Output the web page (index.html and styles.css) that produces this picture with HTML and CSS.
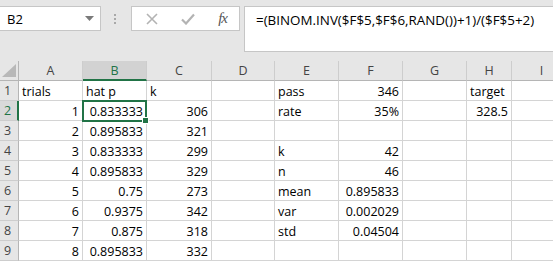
FILE: index.html
```html
<!doctype html>
<html>
<head>
<meta charset="utf-8">
<title>Sheet1</title>
<link rel="stylesheet" href="styles.css">
</head>
<body>
<div class="app">
	<div class="bar">
		<div class="namebox">
			<span>B2</span>
			<svg class="caret" width="9" height="5" viewBox="0 0 9 5"><path d="M0 0h9L4.5 5z" fill="#7a7a7a"/></svg>
		</div>
		<div class="grip"><i></i><i></i><i></i></div>
		<div class="fbtns">
			<svg width="12" height="12" viewBox="0 0 12 12"><path d="M1 1l10 10M11 1L1 11" stroke="#b3b3b3" stroke-width="1.6"/></svg>
			<svg width="14" height="12" viewBox="0 0 14 12"><path d="M1 6.5l4 4L13 1.5" stroke="#b3b3b3" stroke-width="2.2" fill="none"/></svg>
			<span class="fx">fx</span>
		</div>
		<div class="formula">=(BINOM.INV($F$5,$F$6,RAND())+1)/($F$5+2)</div>
	</div>

	<div class="sheet">
		<div class="hd corner"><svg width="14" height="13" viewBox="0 0 14 13"><path d="M14 0V13H0z" fill="#b8b8b8"/></svg></div>
		<div class="hd col">A</div><div class="hd col on">B</div><div class="hd col">C</div><div class="hd col">D</div><div class="hd col">E</div><div class="hd col">F</div><div class="hd col">G</div><div class="hd col">H</div><div class="hd col">I</div>

		<div class="hd row">1</div><div class="c">trials</div><div class="c">hat p</div><div class="c">k</div><div class="c"></div><div class="c">pass</div><div class="c n">346</div><div class="c"></div><div class="c">target</div><div class="c"></div>
		<div class="hd row on">2</div><div class="c n">1</div><div class="c n sel">0.833333</div><div class="c n">306</div><div class="c"></div><div class="c">rate</div><div class="c n">35%</div><div class="c"></div><div class="c n">328.5</div><div class="c"></div>
		<div class="hd row">3</div><div class="c n">2</div><div class="c n">0.895833</div><div class="c n">321</div><div class="c"></div><div class="c"></div><div class="c"></div><div class="c"></div><div class="c"></div><div class="c"></div>
		<div class="hd row">4</div><div class="c n">3</div><div class="c n">0.833333</div><div class="c n">299</div><div class="c"></div><div class="c">k</div><div class="c n">42</div><div class="c"></div><div class="c"></div><div class="c"></div>
		<div class="hd row">5</div><div class="c n">4</div><div class="c n">0.895833</div><div class="c n">329</div><div class="c"></div><div class="c">n</div><div class="c n">46</div><div class="c"></div><div class="c"></div><div class="c"></div>
		<div class="hd row">6</div><div class="c n">5</div><div class="c n">0.75</div><div class="c n">273</div><div class="c"></div><div class="c">mean</div><div class="c n">0.895833</div><div class="c"></div><div class="c"></div><div class="c"></div>
		<div class="hd row">7</div><div class="c n">6</div><div class="c n">0.9375</div><div class="c n">342</div><div class="c"></div><div class="c">var</div><div class="c n">0.002029</div><div class="c"></div><div class="c"></div><div class="c"></div>
		<div class="hd row">8</div><div class="c n">7</div><div class="c n">0.875</div><div class="c n">318</div><div class="c"></div><div class="c">std</div><div class="c n">0.04504</div><div class="c"></div><div class="c"></div><div class="c"></div>
		<div class="hd row">9</div><div class="c n">8</div><div class="c n">0.895833</div><div class="c n">332</div><div class="c"></div><div class="c"></div><div class="c"></div><div class="c"></div><div class="c"></div><div class="c"></div>
	</div>
</div>
</body>
</html>
```

FILE: styles.css
```css
html, body{
	margin:0;
	padding:0;
	background:#e6e6e6;
	overflow:hidden;
	}
.app{
	width:553px;
	height:261px;
	overflow:hidden;
	font-family:"Open Sans", "Liberation Sans", sans-serif;
	color:#000;
	}
/* formula bar */
.bar{
	height:61px;
	display:flex;
	align-items:flex-start;
	}
.namebox{
	box-sizing:border-box;
	width:102px;
	height:25px;
	margin:6px 0 0 -1px;
	padding:0 0 0 7px;
	background:#fff;
	border:1px solid #c6c6c6;
	display:flex;
	align-items:center;
	justify-content:space-between;
	font-size:13px;
	}
.namebox .caret{
	margin-right:6px;
	}
.grip{
	width:30px;
	height:25px;
	margin-top:6px;
	display:flex;
	flex-direction:column;
	align-items:center;
	justify-content:center;
	gap:2px;
	}
.grip i{
	width:2px;
	height:2px;
	background:#a8a8a8;
	margin-left:-2px;
	}
.fbtns{
	box-sizing:border-box;
	width:109px;
	height:25px;
	margin-top:6px;
	padding:0 12px 0 14px;
	background:#fff;
	border:1px solid #c6c6c6;
	display:flex;
	align-items:center;
	justify-content:space-between;
	}
.fx{
	font-family:"Liberation Serif", serif;
	font-style:italic;
	font-size:15px;
	color:#555;
	letter-spacing:-1px;
	}
.formula{
	box-sizing:border-box;
	flex:1;
	height:46px;
	margin:6px -2px 0 4px;
	padding:3px 0 0 11px;
	background:#fff;
	border:1px solid #c6c6c6;
	font-size:13.4px;
	line-height:20px;
	white-space:nowrap;
	}
/* sheet */
.sheet{
	display:grid;
	grid-template-columns:19px 64px 64px 65px 63px 64px 64px 64px 45px 60px;
	grid-auto-rows:20px;
	background:#fff;
	}
.c{
	box-sizing:border-box;
	border-right:1px solid #d4d4d4;
	border-bottom:1px solid #d4d4d4;
	padding:2px 3px 0 3px;
	font-size:12.5px;
	line-height:18px;
	white-space:nowrap;
	}
.c.n{
	text-align:right;
	}
.sel{
	position:relative;
	}
.sel:after{
	content:"";
	position:absolute;
	left:-1px;
	top:-1px;
	right:-1px;
	bottom:-2px;
	border:2px solid #217346;
	}
.sel:before{
	content:"";
	position:absolute;
	right:-3px;
	bottom:-4px;
	width:5px;
	height:5px;
	background:#217346;
	border:1px solid #fff;
	z-index:1;
	}
.hd{
	box-sizing:border-box;
	background:#e6e6e6;
	color:#444;
	font-size:12.5px;
	line-height:19px;
	}
.hd.col{
	text-align:center;
	border-right:1px solid #cdcdcd;
	border-bottom:1px solid #b5b5b5;
	}
.hd.col.on{
	background:#d2d2d2;
	color:#217346;
	border-bottom:2px solid #217346;
	}
.hd.row{
	padding:1px 0 0 4px;
	line-height:18px;
	border-right:1px solid #b5b5b5;
	border-bottom:1px solid #cdcdcd;
	}
.hd.row.on{
	background:#d9d9d9;
	color:#217346;
	border-right:2px solid #217346;
	}
.corner{
	display:flex;
	align-items:flex-end;
	justify-content:flex-end;
	padding:0 2px 3px 0;
	border-right:1px solid #b5b5b5;
	border-bottom:1px solid #b5b5b5;
	}
```
